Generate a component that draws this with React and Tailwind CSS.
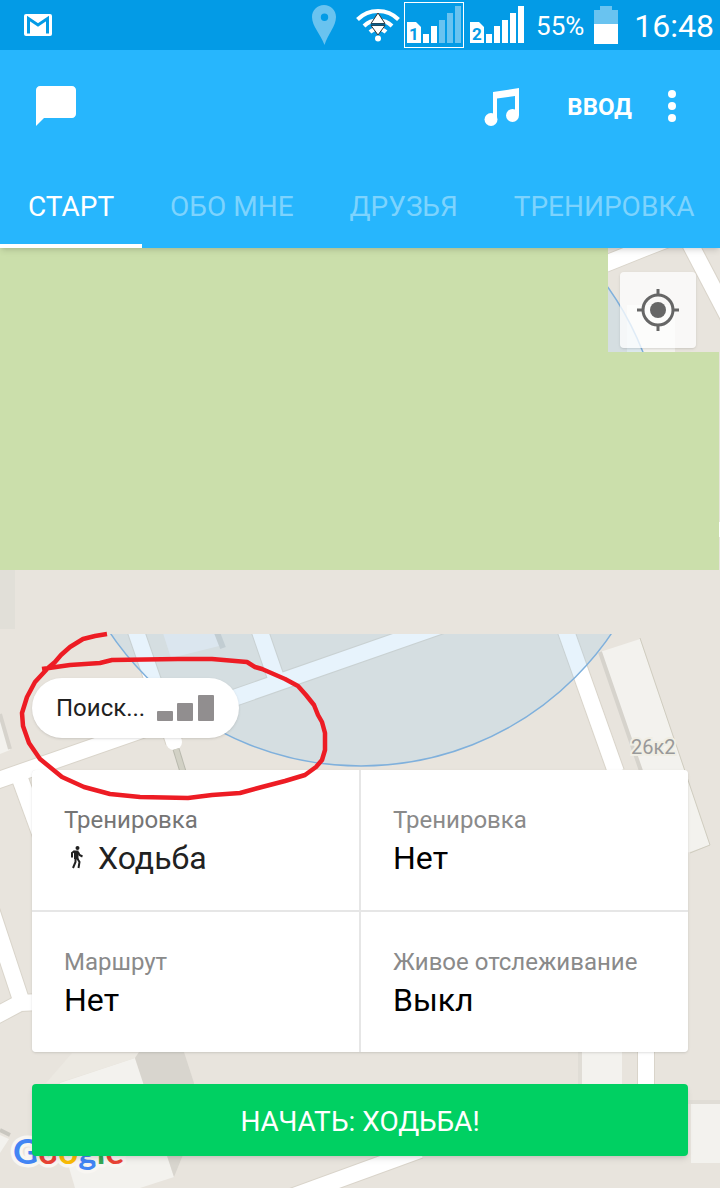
import { useState } from 'react'

const TABS = ['СТАРТ', 'ОБО МНЕ', 'ДРУЗЬЯ', 'ТРЕНИРОВКА']

const SETTINGS = [
  { label: 'Тренировка', value: 'Ходьба', walk: true },
  { label: 'Тренировка', value: 'Нет' },
  { label: 'Маршрут', value: 'Нет' },
  { label: 'Живое отслеживание', value: 'Выкл' },
]

const ROADS = [
  'M-10 783L480 612',
  'M132 620L152 678L174 742',
  'M256 620L276 678',
  'M562 620L616 772',
  'M19 776L60 888',
  'M-14 894L21 1000',
  'M-10 1019L20 1003L40 1002',
  'M280 1201L420 1150',
  'M646 1045v50',
  'M600 266L650 246L676 236',
  'M686 236L732 324',
]

function GmailIcon() {
  return (
    <svg width="28" height="24" viewBox="0 0 28 24">
      <rect y="1" width="28" height="22" rx="2" fill="#fff" />
      <path d="M4.500 20.500V5.500L14 12L23.500 5.500V20.500" fill="none" stroke="#039be6" strokeWidth="3" />
    </svg>
  )
}

function PinIcon() {
  return (
    <svg width="24" height="40" viewBox="0 0 24 40">
      <path
        d="M12 0C5.300 0 0 5.300 0 12c0 9 8.500 17 12.500 28C16 29 24 21 24 12 24 5.300 18.700 0 12 0zm.5 8.500a3.700 3.700 0 1 1 0 7.400 3.700 3.700 0 0 1 0-7.400z"
        fill="#69c3f0"
      />
    </svg>
  )
}

function WifiIcon() {
  return (
    <svg width="44" height="34" viewBox="0 0 44 34">
      <g fill="none" stroke="#fff" strokeWidth="4">
        <path d="M1.500 11.500a29 29 0 0 1 41 0" />
        <path d="M8 18a20 20 0 0 1 28 0" />
        <path d="M14 24a11.500 11.500 0 0 1 16 0" />
      </g>
      <circle cx="22" cy="30.500" r="3" fill="#fff" />
      <path d="M15 15.500L22 5l7 10.500zM15 17.500L22 27l7-9.500z" fill="#fff" stroke="#333" />
      <path d="M15 16.500h14" stroke="#0b5f8c" strokeWidth="2" />
    </svg>
  )
}

function SimIcon({ number, level }) {
  return (
    <svg width="54" height="38" viewBox="0 0 54 38">
      <path d="M0 16h9l5 5v16H0z" fill="#fff" />
      <text x="7" y="34" textAnchor="middle" fontSize="17" fontWeight="700" fill="#039be6">
        {number}
      </text>
      {[9, 17, 23, 30, 37].map((h, i) => (
        <rect key={h} x={16 + i * 8} y={37 - h} width="6" height={h} fill={i < level ? '#fff' : '#69c3f0'} />
      ))}
    </svg>
  )
}

function BatteryIcon() {
  return (
    <svg width="24" height="38" viewBox="0 0 24 38">
      <path d="M6 0h12v4h6v14H0V4h6z" fill="#69c3f0" />
      <path d="M0 18h24v20H0z" fill="#fff" />
    </svg>
  )
}

function StatusBar() {
  return (
    <div className="flex h-[50px] items-center bg-[#039be6] pr-1.5 pl-6 text-white">
      <GmailIcon />
      <div className="ml-auto flex items-center">
        <PinIcon />
        <div className="ml-5">
          <WifiIcon />
        </div>
        <div className="ml-1 flex h-[46px] items-center border border-white px-0.5">
          <SimIcon number="1" level={2} />
        </div>
        <div className="ml-1.5">
          <SimIcon number="2" level={5} />
        </div>
        <span className="ml-3 pt-0.5 text-[26px]">55%</span>
        <div className="ml-2.5">
          <BatteryIcon />
        </div>
        <span className="ml-4 pt-0.5 text-[32px]">16:48</span>
      </div>
    </div>
  )
}

function Toolbar() {
  return (
    <div className="flex h-28 items-center pr-6 pl-8 text-white">
      <button aria-label="Сообщения">
        <svg width="48" height="48" viewBox="0 0 24 24" fill="currentColor">
          <path d="M20 2H4c-1.100 0-2 .9-2 2v18l4-4h14c1.100 0 2-.9 2-2V4c0-1.100-.9-2-2-2z" />
        </svg>
      </button>
      <button aria-label="Музыка" className="ml-auto">
        <svg width="48" height="48" viewBox="0 0 48 48" fill="currentColor">
          <path d="M14 10L40 6v27h-4V14L18 16.500v21h-4z" />
          <circle cx="12" cy="37.500" r="6.500" />
          <circle cx="33.500" cy="33.500" r="6.500" />
        </svg>
      </button>
      <button className="ml-10 pt-0.5 text-2xl font-bold">ВВОД</button>
      <button aria-label="Ещё" className="ml-4">
        <svg width="48" height="48" viewBox="0 0 48 48" fill="currentColor">
          <circle cx="24" cy="12" r="4" />
          <circle cx="24" cy="24" r="4" />
          <circle cx="24" cy="36" r="4" />
        </svg>
      </button>
    </div>
  )
}

function MapView() {
  return (
    <svg
      className="absolute inset-0 h-full w-full"
      viewBox="0 248 720 940"
      preserveAspectRatio="xMidYMid slice"
      aria-hidden="true"
    >
      <rect y="248" width="720" height="940" fill="#e8e4dd" />

      {/* buildings */}
      <g fill="#f3f2ee">
        <path d="M600 652L640 639L710 845L672 858z" />
        <path d="M0 715L10 750L0 754z" />
        <path d="M60 1083L135 1058L174 1177L140 1188H75L58 1130z" />
        <path d="M582 1045h40v50h-40zM691 1104h29v59h-29z" />
        <path d="M0 1135l9 4l-9 14z" />
        <path d="M627 305h48v60h-48z" />
      </g>
      <path d="M46 1083L72 1053H139L135 1058L58 1083z" fill="#ece9e2" />
      <path d="M135 1058L139 1052H184L194 1083L193 1130L174 1177z" fill="#d8d5ce" />
      <path d="M578 1050h4v40h-4zM688 1100h32v4h-32z" fill="#e0ddd6" />
      <path d="M600 652L641 771M0 714L10 749" stroke="#d6d3cc" strokeWidth="4" />
      <path d="M0 1130l10 5" stroke="#c9c7c0" strokeWidth="4" />
      <path d="M640 638L710 845L690 853" fill="none" stroke="#cfccbf" />

      {/* roads: soft edge first, white on top */}
      <g fill="none" stroke="#d9d4ca" strokeWidth="18">
        {ROADS.map(d => <path key={d} d={d} />)}
      </g>
      <g fill="none" stroke="#fff" strokeWidth="16">
        {ROADS.map(d => <path key={d} d={d} />)}
      </g>
      <circle cx="174" cy="742" r="8" fill="#fff" />
      <path d="M176 749L184 775" stroke="#b9b9ae" strokeWidth="7" />
      <path d="M176 749L184 775" stroke="#d2d1c5" strokeWidth="5" />
      <path d="M162 630L171 658L223 645L218 630z" fill="#f0efef" />
      <path d="M216 630L223 648" stroke="#d0cfca" strokeWidth="6" />

      {/* accuracy radius */}
      <circle cx="361" cy="463" r="303" fill="#90caf0" fillOpacity="0.22" stroke="#7fb0dc" strokeWidth="1.500" />

      {/* park and the plain strip under it */}
      <path d="M0 248H608V352H719V570H0z" fill="#cbdfab" />
      <path d="M719 522h1v15h-1z" fill="#fff" />
      <path d="M0 570h720v64H0z" fill="#e8e4dd" />
      <path d="M0 570h15v59H0z" fill="#e1dfd8" />

      <text x="631" y="754" fontSize="20" fill="#999" stroke="#f0eee4" strokeWidth="4" paintOrder="stroke">
        26к2
      </text>
      <text
        x="13"
        y="1164"
        className="font-['Lato']"
        fontSize="35"
        fontWeight="700"
        stroke="#f8f6f2"
        strokeWidth="7"
        strokeLinejoin="round"
        paintOrder="stroke"
      >
        <tspan fill="#4285f4">G</tspan>
        <tspan fill="#ea4335">o</tspan>
        <tspan fill="#fbbc05">o</tspan>
        <tspan fill="#4285f4">g</tspan>
        <tspan fill="#34a853">l</tspan>
        <tspan fill="#ea4335">e</tspan>
      </text>
    </svg>
  )
}

function RedMark() {
  return (
    <svg
      className="pointer-events-none absolute inset-0 h-full w-full"
      viewBox="0 248 720 940"
      preserveAspectRatio="xMidYMid slice"
      aria-hidden="true"
    >
      <path
        d="M107 634L95 636L83 639L70 647L61 655L55 662L48 668L35 682L27 697L22 713L23 726L29 743L40 759L62 777L84 787L110 794L140 797L188 798L212 795L240 793L262 787L285 781L305 775L316 767L322 760L325 750V733L322 722L318 715L314 705L306 695L298 686L285 679L262 669L255 667L247 662L212 659H178L112 660L100 663L70 665L42 669"
        fill="none"
        stroke="#ed1c24"
        strokeWidth="4.500"
        strokeLinejoin="round"
      />
    </svg>
  )
}

function WalkIcon() {
  return (
    <svg width="24" height="24" viewBox="0 0 24 24" fill="none" stroke="#212121" strokeWidth="2">
      <circle cx="13.500" cy="2" r="2" fill="#212121" stroke="none" />
      <path d="M10 4.500h4.500V13H10z" fill="#212121" stroke="none" />
      <path d="M10.500 5L8 7v4.500M14 6l1.500 3l3 1.500" />
      <path d="M11.500 12v4L9 22M13 12l2.500 4L14.500 22" />
    </svg>
  )
}

export default function App() {
  const [active, setActive] = useState('СТАРТ')

  return (
    <div className="flex min-h-screen flex-col overflow-x-hidden font-['Roboto',sans-serif]">
      <header className="relative z-10 bg-[#27b6fd] shadow-md">
        <StatusBar />
        <Toolbar />
        <nav className="flex h-[86px] overflow-hidden">
          {TABS.map(tab => (
            <button
              key={tab}
              onClick={() => setActive(tab)}
              className={`shrink-0 border-b-4 px-7 pt-2 text-[28px] ${tab === active ? 'border-white text-white' : 'border-transparent text-[#7dd3fd]'}`}
            >
              {tab}
            </button>
          ))}
        </nav>
      </header>

      <main className="relative flex flex-1 flex-col overflow-hidden">
        <MapView />

        <button
          aria-label="Моё местоположение"
          className="relative mt-6 mr-6 mb-8 flex size-[76px] items-center justify-center self-end rounded-sm bg-white/75 shadow"
        >
          <svg width="42" height="42" viewBox="0 0 42 42" fill="none" stroke="#666" strokeWidth="3">
            <circle cx="21" cy="21" r="15" />
            <circle cx="21" cy="21" r="8" fill="#666" stroke="none" />
            <path d="M21 0v6M21 36v6M0 21h6M36 21h6" />
          </svg>
        </button>

        <div className="relative mt-auto ml-8 flex h-[60px] items-center gap-3 self-start rounded-full bg-white px-6 shadow">
          <span className="text-2xl text-[#212121]">Поиск...</span>
          <svg width="58" height="26" viewBox="0 0 58 26" fill="#918e8f">
            <rect y="16" width="16" height="10" rx="1" />
            <rect x="20" y="8" width="16" height="18" rx="1" />
            <rect x="41" width="16" height="26" rx="1" />
          </svg>
        </div>

        <div className="relative mx-8 mt-8 grid grid-cols-2 gap-0.5 overflow-hidden rounded bg-[#e6e6e6] shadow">
          {SETTINGS.map(({ label, value, walk }, i) => (
            <button key={i} className="flex h-[140px] flex-col items-start bg-white px-8 pt-9 text-left">
              <span className={`text-2xl leading-7 ${walk ? 'text-[#757575]' : 'text-[#8a8a8a]'}`}>{label}</span>
              <span className={`flex items-center gap-2.5 text-[32px] leading-[48px] ${walk ? 'text-[#212121]' : 'text-black'}`}>
                {walk && <WalkIcon />}
                {value}
              </span>
            </button>
          ))}
        </div>

        <button className="relative m-8 h-[72px] rounded bg-[#00d062] pt-1 text-[28px] text-white shadow-md">
          НАЧАТЬ: ХОДЬБА!
        </button>

        <RedMark />
      </main>
    </div>
  )
}
